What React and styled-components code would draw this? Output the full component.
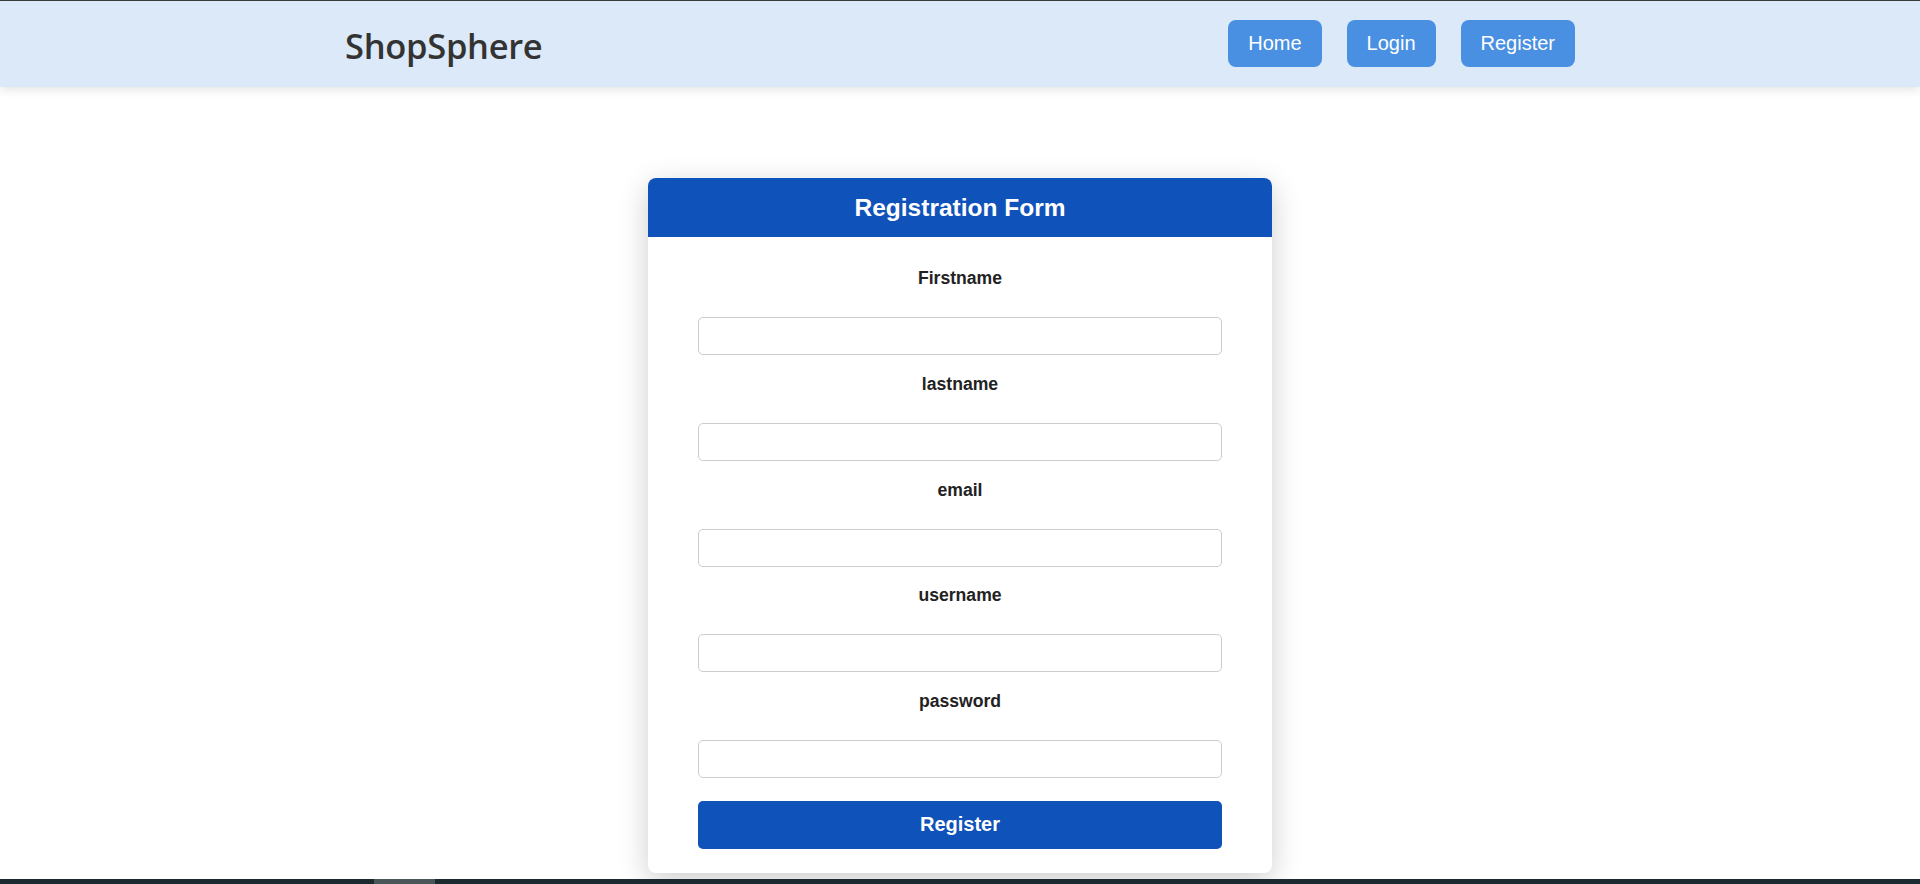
import React from "react";
import styled, { createGlobalStyle } from "styled-components";

const GlobalStyle = createGlobalStyle`
  html, body {
    margin: 0;
    padding: 0;
    background: #ffffff;
    font-family: "Liberation Sans", Arial, sans-serif;
  }
  * { box-sizing: border-box; }
`;

const Page = styled.div`
  min-height: 884px;
  display: flex;
  flex-direction: column;
`;

const NavBar = styled.header`
  height: 87px;
  background: #dce9f8;
  border-top: 1px solid #3b3b3b;
  box-shadow: 0 2px 10px rgba(0, 0, 0, 0.12);
  position: relative;
  z-index: 1;
`;

const NavInner = styled.div`
  width: 1230px;
  height: 100%;
  margin: 0 auto;
  display: flex;
  align-items: center;
  justify-content: space-between;
`;

const Logo = styled.div`
  font-family: "Open Sans", "Noto Sans", sans-serif;
  font-size: 34.5px;
  font-weight: 600;
  color: #333333;
  letter-spacing: -0.3px;
  padding-top: 3px;
`;

const NavLinks = styled.nav`
  display: flex;
  gap: 25px;
  margin-top: -1px;
`;

const NavButton = styled.a`
  display: inline-block;
  background: #4a90e2;
  color: #ffffff;
  font-family: "Liberation Sans", Arial, sans-serif;
  font-size: 20px;
  line-height: 23px;
  padding: 12px 20px;
  border-radius: 8px;
  text-decoration: none;
`;

const Main = styled.main`
  display: flex;
  justify-content: center;
  padding-top: 91px;
`;

const Card = styled.section`
  width: 624px;
  background: #ffffff;
  border-radius: 8px;
  box-shadow: 0 8px 30px rgba(0, 0, 0, 0.2);
  overflow: hidden;
`;

const CardHeader = styled.h2`
  margin: 0;
  height: 59px;
  display: flex;
  align-items: center;
  justify-content: center;
  background: #0f52ba;
  color: #ffffff;
  font-family: "Liberation Sans", Arial, sans-serif;
  font-size: 24.5px;
  font-weight: 700;
`;

const Form = styled.form`
  padding: 31px 50px 24px;
  display: flex;
  flex-direction: column;
`;

const Field = styled.div`
  display: flex;
  flex-direction: column;
  margin-bottom: ${(p) => (p.$last ? "22.8px" : "18.8px")};
`;

const Label = styled.label`
  display: block;
  text-align: center;
  font-size: 17.6px;
  line-height: 20px;
  font-weight: 700;
  color: #222222;
  margin-bottom: 29px;
`;

const Input = styled.input`
  height: 38px;
  width: 100%;
  border: 1px solid #cccccc;
  border-radius: 5px;
  padding: 0 10px;
  font-size: 16px;
  outline: none;
`;

const SubmitButton = styled.button`
  height: 48px;
  width: 100%;
  border: none;
  border-radius: 5px;
  background: #0f52ba;
  color: #ffffff;
  font-family: "Liberation Sans", Arial, sans-serif;
  font-size: 20px;
  font-weight: 700;
  cursor: pointer;
`;

const BottomBar = styled.div`
  position: fixed;
  left: 0;
  right: 0;
  bottom: 0;
  height: 5px;
  background: #1b2a2e;
  z-index: 5;
`;

const BottomThumb = styled.div`
  position: absolute;
  left: 374px;
  width: 61px;
  top: 0;
  bottom: 0;
  background: #4b5659;
`;

const fields = ["Firstname", "lastname", "email", "username", "password"];

export default function App() {
  return (
    <>
      <GlobalStyle />
      <Page>
        <NavBar>
          <NavInner>
            <Logo>ShopSphere</Logo>
            <NavLinks>
              <NavButton href="#">Home</NavButton>
              <NavButton href="#">Login</NavButton>
              <NavButton href="#">Register</NavButton>
            </NavLinks>
          </NavInner>
        </NavBar>
        <Main>
          <Card>
            <CardHeader>Registration Form</CardHeader>
            <Form onSubmit={(e) => e.preventDefault()}>
              {fields.map((f, i) => (
                <Field key={f} $last={i === fields.length - 1}>
                  <Label htmlFor={f}>{f}</Label>
                  <Input id={f} type={f === "password" ? "password" : "text"} />
                </Field>
              ))}
              <SubmitButton type="submit">Register</SubmitButton>
            </Form>
          </Card>
        </Main>
      </Page>
      <BottomBar>
        <BottomThumb />
      </BottomBar>
    </>
  );
}
